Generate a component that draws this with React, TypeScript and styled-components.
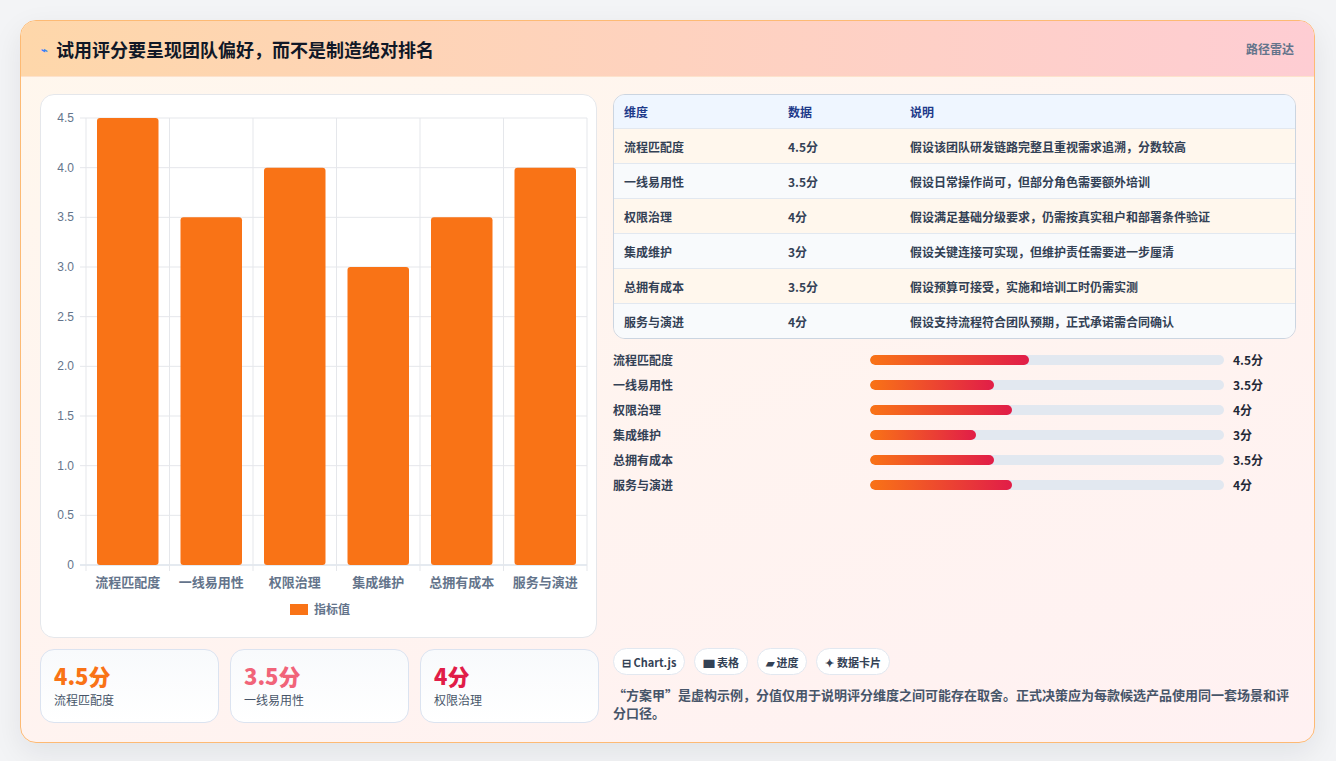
import styled, { createGlobalStyle } from "styled-components";

const Global = createGlobalStyle`
  body {
    margin: 0;
    background: #f3f4f6;
    font-family: "Noto Sans CJK SC", "Noto Sans", sans-serif;
  }
`;

const Page = styled.div`
  padding: 20px 21px 20px 20px;
  height: 761px;
  box-sizing: border-box;
`;

const Card = styled.div`
  height: 721px;
  border: 1px solid #fdba74;
  border-radius: 16px;
  overflow: hidden;
  background: linear-gradient(160deg, #fff7ed 0%, #fff1f2 100%);
  box-shadow: 0 10px 30px rgba(15, 23, 42, 0.08);
  display: flex;
  flex-direction: column;
`;

const Header = styled.div`
  height: 55px;
  flex: none;
  display: flex;
  align-items: center;
  justify-content: space-between;
  padding: 0 20px 0 20px;
  background: linear-gradient(90deg, #fed7aa 0%, #fecdd3 100%);
  border-bottom: 1px solid #fde2cc;
`;

const Title = styled.h1`
  margin: 0;
  font-size: 18px;
  font-weight: 700;
  color: #111827;
  display: flex;
  align-items: center;
  gap: 8px;
`;

const Spark = styled.span`
  color: #3b82f6;
  font-size: 11px;
`;

const HeaderTag = styled.span`
  font-size: 12px;
  color: #64748b;
  font-weight: 600;
`;

const Body = styled.div`
  flex: 1;
  display: grid;
  grid-template-columns: 557px 683px;
  gap: 16px;
  padding: 17px 19px 18px 19px;
`;

const Left = styled.div`
  display: flex;
  flex-direction: column;
  gap: 11px;
`;

const ChartCard = styled.div`
  height: 544px;
  background: #fff;
  border: 1px solid #e5e7eb;
  border-radius: 14px;
  box-sizing: border-box;
`;

const Stats = styled.div`
  display: grid;
  grid-template-columns: repeat(3, 179px);
  gap: 11px;
`;

const Stat = styled.div`
  height: 74px;
  box-sizing: border-box;
  border: 1px solid #dbe3f0;
  border-radius: 14px;
  background: linear-gradient(180deg, #f8fafc, #ffffff);
  padding: 10px 13px;
`;

const StatValue = styled.div<{ $color: string }>`
  font-size: 22px;
  font-weight: 800;
  line-height: 30px;
  color: ${(p) => p.$color};
`;

const StatLabel = styled.div`
  font-size: 12px;
  color: #475569;
  margin-top: 1px;
`;

const Right = styled.div`
  display: flex;
  flex-direction: column;
`;

const Table = styled.div`
  border: 1px solid #cbd5e1;
  border-radius: 12px;
  overflow: hidden;
  font-size: 12px;
`;

const TRow = styled.div<{ $bg: string; $head?: boolean }>`
  display: grid;
  grid-template-columns: 164px 122px 1fr;
  align-items: center;
  height: ${(p) => (p.$head ? 33 : 35)}px;
  padding-left: 10px;
  background: ${(p) => p.$bg};
  border-top: ${(p) => (p.$head ? "none" : "1px solid #e2e8f0")};
  box-sizing: border-box;
  color: ${(p) => (p.$head ? "#1e3a8a" : "#334155")};
  font-weight: 600;
`;

const Bars = styled.div`
  margin-top: 8px;
  display: flex;
  flex-direction: column;
`;

const BarRow = styled.div`
  display: grid;
  grid-template-columns: 257px 354px 1fr;
  gap: 0;
  align-items: center;
  height: 25px;
  font-size: 12px;
  font-weight: 600;
  color: #334155;
`;

const Track = styled.div`
  height: 10px;
  border-radius: 5px;
  background: #e2e8f0;
  overflow: hidden;
`;

const Fill = styled.div`
  height: 100%;
  border-radius: 5px;
  background: linear-gradient(90deg, #f97316, #e11d48);
`;

const BarValue = styled.span`
  padding-left: 9px;
  font-weight: 700;
  color: #1f2937;
`;

const Chips = styled.div`
  margin-top: auto;
  display: flex;
  gap: 9px;
`;

const Chip = styled.span`
  height: 27px;
  box-sizing: border-box;
  padding: 0 8px;
  border: 1px solid #e2e8f0;
  border-radius: 14px;
  background: #fff;
  display: inline-flex;
  align-items: center;
  gap: 3px;
  font-size: 11px;
  font-weight: 700;
  color: #334155;
`;

const Note = styled.p`
  margin: 11px 0 2px;
  font-size: 13px;
  line-height: 18px;
  font-weight: 600;
  color: #475569;
`;

const data = [
  { k: "流程匹配度", v: 4.5, d: "假设该团队研发链路完整且重视需求追溯，分数较高" },
  { k: "一线易用性", v: 3.5, d: "假设日常操作尚可，但部分角色需要额外培训" },
  { k: "权限治理", v: 4, d: "假设满足基础分级要求，仍需按真实租户和部署条件验证" },
  { k: "集成维护", v: 3, d: "假设关键连接可实现，但维护责任需要进一步厘清" },
  { k: "总拥有成本", v: 3.5, d: "假设预算可接受，实施和培训工时仍需实测" },
  { k: "服务与演进", v: 4, d: "假设支持流程符合团队预期，正式承诺需合同确认" },
];

function BarChart() {
  const x0 = 45, x1 = 546, yTop = 23, yBot = 470;
  const step = (x1 - x0) / 6;
  const y = (v: number) => yBot - (v / 4.5) * (yBot - yTop);
  const ticks = [0, 0.5, 1, 1.5, 2, 2.5, 3, 3.5, 4, 4.5];
  return (
    <svg width="555" height="542" style={{ display: "block" }}>
      {ticks.map((t) => (
        <g key={t}>
          <line x1={x0 - 6} x2={x1} y1={y(t)} y2={y(t)} stroke={t === 0 ? "#cbd5e1" : "#e5e7eb"} />
          <text x={x0 - 12} y={y(t) + 4} textAnchor="end" fontSize="12" fill="#64748b" fontFamily="Liberation Sans, sans-serif">
            {t === 0 ? "0" : t.toFixed(1)}
          </text>
        </g>
      ))}
      {Array.from({ length: 7 }).map((_, i) => (
        <line key={i} x1={x0 + i * step} x2={x0 + i * step} y1={yTop} y2={yBot + 6} stroke="#e5e7eb" />
      ))}
      {data.map((d, i) => (
        <g key={d.k}>
          <rect x={x0 + i * step + 11} y={y(d.v)} width={step - 22} height={yBot - y(d.v)} rx="3" fill="#f97316" />
          <text x={x0 + i * step + step / 2} y={492} textAnchor="middle" fontSize="13" fill="#64748b" fontWeight="600">
            {d.k}
          </text>
        </g>
      ))}
      <rect x="249" y="509" width="18" height="11" fill="#f97316" />
      <text x="273" y="519" fontSize="12" fill="#64748b" fontWeight="600">指标值</text>
    </svg>
  );
}

export default function App() {
  const rows = ["#fff7ed", "#f8fafc"];
  return (
    <>
      <Global />
      <Page>
        <Card>
          <Header>
            <Title>
              <Spark>⌁</Spark>试用评分要呈现团队偏好，而不是制造绝对排名
            </Title>
            <HeaderTag>路径雷达</HeaderTag>
          </Header>
          <Body>
            <Left>
              <ChartCard>
                <BarChart />
              </ChartCard>
              <Stats>
                <Stat>
                  <StatValue $color="#f97316">4.5分</StatValue>
                  <StatLabel>流程匹配度</StatLabel>
                </Stat>
                <Stat>
                  <StatValue $color="#f16479">3.5分</StatValue>
                  <StatLabel>一线易用性</StatLabel>
                </Stat>
                <Stat>
                  <StatValue $color="#e11d48">4分</StatValue>
                  <StatLabel>权限治理</StatLabel>
                </Stat>
              </Stats>
            </Left>
            <Right>
              <Table>
                <TRow $head $bg="#eff6ff">
                  <span>维度</span>
                  <span>数据</span>
                  <span>说明</span>
                </TRow>
                {data.map((d, i) => (
                  <TRow key={d.k} $bg={rows[i % 2]}>
                    <span>{d.k}</span>
                    <span>{d.v}分</span>
                    <span>{d.d}</span>
                  </TRow>
                ))}
              </Table>
              <Bars>
                {data.map((d) => (
                  <BarRow key={d.k}>
                    <span>{d.k}</span>
                    <Track>
                      <Fill style={{ width: `${d.v * 10}%` }} />
                    </Track>
                    <BarValue>{d.v}分</BarValue>
                  </BarRow>
                ))}
              </Bars>
              <Chips>
                <Chip>⊟ Chart.js</Chip>
                <Chip>▆ 表格</Chip>
                <Chip>▰ 进度</Chip>
                <Chip>✦ 数据卡片</Chip>
              </Chips>
              <Note>
                “方案甲”是虚构示例，分值仅用于说明评分维度之间可能存在取舍。正式决策应为每款候选产品使用同一套场景和评分口径。
              </Note>
            </Right>
          </Body>
        </Card>
      </Page>
    </>
  );
}
